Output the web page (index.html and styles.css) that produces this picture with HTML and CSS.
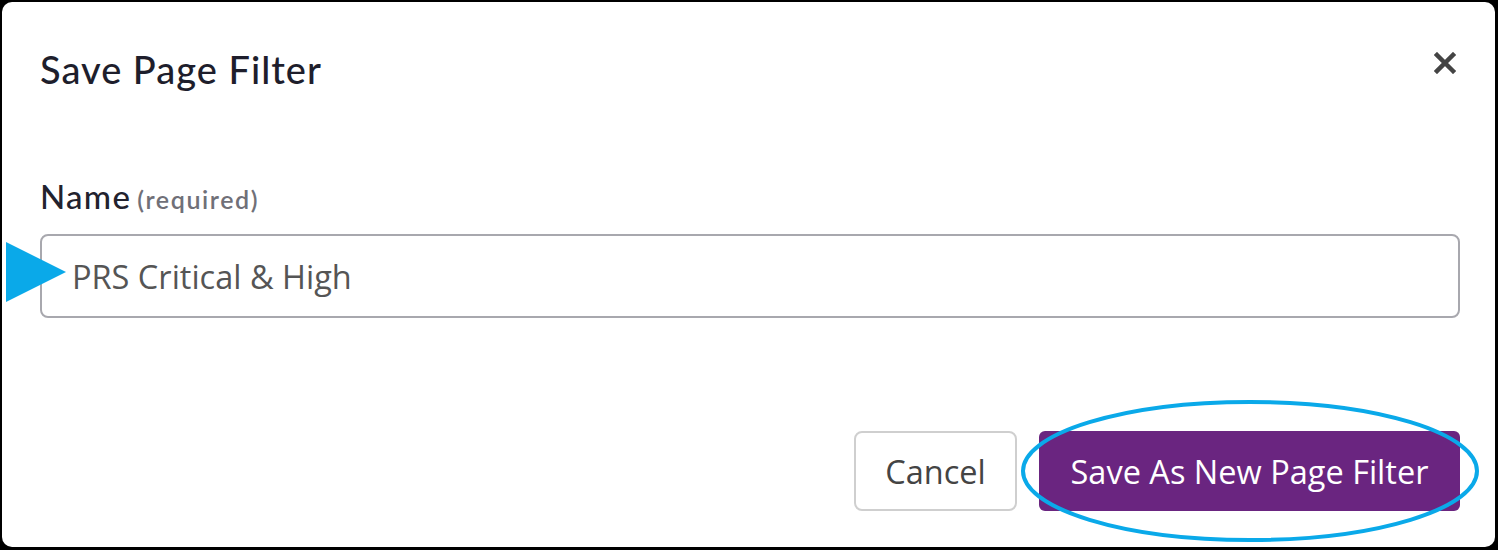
FILE: index.html
```html
<!DOCTYPE html>
<html>
<head>
<meta charset="utf-8">
<link rel="stylesheet" href="styles.css">
</head>
<body>
<div class="frame">
  <div class="dialog">
    <div class="header">
      <h1 class="title">Save Page Filter</h1>
      <button class="close" aria-label="Close">
        <svg width="22" height="22" viewBox="0 0 22 22"><path d="M3 3 L19 19 M19 3 L3 19" stroke="#444" stroke-width="4.5" stroke-linecap="square" fill="none"/></svg>
      </button>
    </div>
    <div class="body">
      <label class="label">Name<span class="req">(required)</span></label>
      <div class="field">
        <div class="pointer"></div>
        <div class="input">PRS Critical &amp; High</div>
      </div>
    </div>
    <div class="footer">
      <button class="btn btn-cancel">Cancel</button>
      <div class="save-wrap">
        <button class="btn btn-save">Save As New Page Filter</button>
        <svg class="ring" width="464" height="146" viewBox="0 0 464 146"><ellipse cx="232" cy="73" rx="227" ry="69" fill="none" stroke="#0aa9e9" stroke-width="4"/></svg>
      </div>
    </div>
  </div>
</div>
</body>
</html>
```
FILE: styles.css
```css
html, body { margin: 0; padding: 0; }
body { background: #000; width: 1498px; height: 550px; overflow: hidden; }
.frame {
  box-sizing: border-box;
  width: 1498px; height: 550px;
  padding: 2px 3px 3px 2px;
  background: #000;
}
.dialog {
  box-sizing: border-box;
  height: 100%;
  background: #fff;
  border-radius: 10px;
  display: flex; flex-direction: column;
  padding: 0 35px 0 38px;
}
.header {
  display: flex; justify-content: space-between; align-items: flex-start;
  padding-top: 43px;
}
.title {
  margin: 0;
  font-family: "Lato", sans-serif;
  font-weight: 500;
  font-size: 38px;
  color: #1e1e2c;
  line-height: 48px;
  letter-spacing: 1px;
}
.close {
  background: none; border: 0; padding: 0; margin: 7px 4px 0 0;
  width: 22px; height: 22px; cursor: pointer;
}
.body { padding-top: 83px; }
.label {
  display: block;
  font-family: "Lato", sans-serif;
  font-size: 33px;
  color: #22222e;
  font-weight: 500;
  line-height: 40px;
  letter-spacing: 1.3px;
}
.req {
  font-size: 25px; color: #707078; font-weight: 600; margin-left: 6px; letter-spacing: 1.6px;
}
.field { position: relative; margin-top: 15px; }
.pointer {
  position: absolute; left: -34px; top: 8px;
  width: 0; height: 0;
  border-top: 30px solid transparent;
  border-bottom: 30px solid transparent;
  border-left: 60px solid #0aa9e9;
}
.input {
  box-sizing: border-box;
  height: 84px;
  border: 2px solid #a8a8ae;
  border-radius: 8px;
  padding: 0 30px;
  display: flex; align-items: center;
  font-family: "Open Sans", sans-serif;
  font-size: 32.5px;
  color: #555;
}
.footer {
  margin-top: auto;
  display: flex; justify-content: flex-end; align-items: center;
  gap: 22px;
  padding-bottom: 36px;
}
.btn {
  box-sizing: border-box;
  height: 80px;
  font-family: "Open Sans", sans-serif;
  font-size: 32.5px;
  border-radius: 8px;
  cursor: pointer;
  padding: 0;
}
.btn-cancel {
  width: 163px;
  background: #fff;
  border: 2px solid #cfcfcf;
  color: #444;
}
.save-wrap { position: relative; }
.btn-save {
  width: 421px;
  background: #6a2580;
  border: 0;
  color: #fff;
  border-radius: 6px;
  display: block;
}
.ring {
  position: absolute; left: -21px; top: -33px;
  pointer-events: none;
}
```
